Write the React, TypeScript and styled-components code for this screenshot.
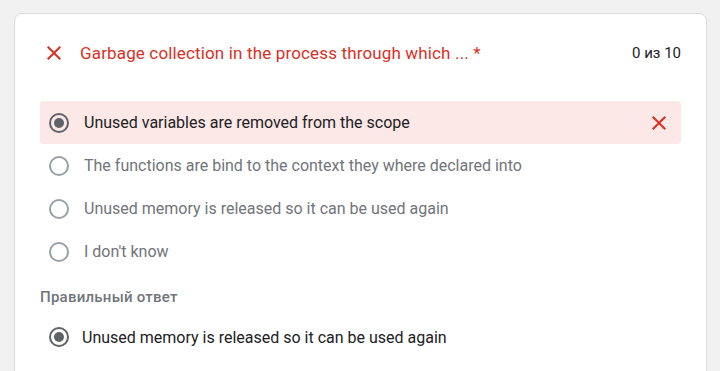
import React from 'react';
import styled, {createGlobalStyle} from "styled-components";

const GlobalStyle = createGlobalStyle`
    html, body {
        margin: 0;
        padding: 0;
        background: #f1f1f1;
        font-family: Roboto, "Noto Sans", Arial, sans-serif;
    }
`

type OptionType = {
    text: string
    selected?: boolean
    wrong?: boolean
}

const options: OptionType[] = [
    {text: "Unused variables are removed from the scope", selected: true, wrong: true},
    {text: "The functions are bind to the context they where declared into"},
    {text: "Unused memory is released so it can be used again"},
    {text: "I don't know"},
]

const Cross = ({size = 24}: { size?: number }) => (
    <svg width={size} height={size} viewBox="0 0 24 24" fill="#d93025">
        <path d="M19 6.41 17.59 5 12 10.59 6.41 5 5 6.41 10.59 12 5 17.59 6.41 19 12 13.41 17.59 19 19 17.59 13.41 12z"/>
    </svg>
)

const Radio = ({checked}: { checked?: boolean }) => (
    <RadioCircle $checked={checked}>
        {checked && <RadioDot/>}
    </RadioCircle>
)

export default function App() {
    return (
        <Page>
            <GlobalStyle/>
            <Card>
                <Header>
                    <HeaderIcon><Cross/></HeaderIcon>
                    <Title>Garbage collection in the process through which ... *</Title>
                    <Score>0 из 10</Score>
                </Header>

                <Options>
                    {options.map((o) => (
                        <Option key={o.text} $wrong={o.wrong}>
                            <Radio checked={o.selected}/>
                            <OptionText $selected={o.selected}>{o.text}</OptionText>
                            {o.wrong && <RowIcon><Cross/></RowIcon>}
                        </Option>
                    ))}
                </Options>

                <Correct>
                    <CorrectLabel>Правильный ответ</CorrectLabel>
                    <CorrectRow>
                        <Radio checked/>
                        <OptionText $selected>Unused memory is released so it can be used again</OptionText>
                    </CorrectRow>
                </Correct>
            </Card>
        </Page>
    );
}

const Page = styled.div`
    width: 720px;
    height: 371px;
    overflow: hidden;
    padding: 13px 13px 0 14px;
    box-sizing: border-box;
`

const Card = styled.div`
    background: #fff;
    border: 1px solid #dadce0;
    border-radius: 8px;
    padding: 24px 25px 40px 25px;
    min-height: 420px;
    box-sizing: border-box;
`

const Header = styled.div`
    display: flex;
    align-items: center;
    padding: 3px 0 0 2px;
    height: 24px;
`

const HeaderIcon = styled.div`
    display: flex;
    margin-right: 14px;
`

const Title = styled.div`
    flex: 1;
    color: #d93025;
    font-size: 17px;
    letter-spacing: 0.15px;
`

const Score = styled.div`
    color: #202124;
    font-size: 15px;
`

const Options = styled.div`
    margin-top: 36px;
    display: flex;
    flex-direction: column;
`

const Option = styled.div<{ $wrong?: boolean }>`
    display: flex;
    align-items: center;
    height: 43px;
    padding: 0 10px 0 9px;
    border-radius: 4px;
    background: ${p => p.$wrong ? "#fce8e6" : "transparent"};
`

const RadioCircle = styled.div<{ $checked?: boolean }>`
    width: 20px;
    height: 20px;
    box-sizing: border-box;
    border-radius: 50%;
    border: 2px solid ${p => p.$checked ? "#5f6368" : "#9aa0a6"};
    display: flex;
    align-items: center;
    justify-content: center;
    flex-shrink: 0;
`

const RadioDot = styled.div`
    width: 10px;
    height: 10px;
    border-radius: 50%;
    background: #5f6368;
`

const OptionText = styled.div<{ $selected?: boolean }>`
    flex: 1;
    margin-left: 15px;
    font-size: 16px;
    letter-spacing: 0;
    color: ${p => p.$selected ? "#202124" : "#70757a"};
`

const RowIcon = styled.div`
    display: flex;
`

const Correct = styled.div`
    margin-top: 14px;
`

const CorrectLabel = styled.div`
    color: #70757a;
    font-size: 15px;
    font-weight: 500;
    letter-spacing: 0.25px;
    height: 20px;
    line-height: 20px;
`

const CorrectRow = styled.div`
    display: flex;
    align-items: center;
    margin-top: 20px;
    padding-left: 9px;

    ${OptionText} {
        margin-left: 13px;
    }
`
